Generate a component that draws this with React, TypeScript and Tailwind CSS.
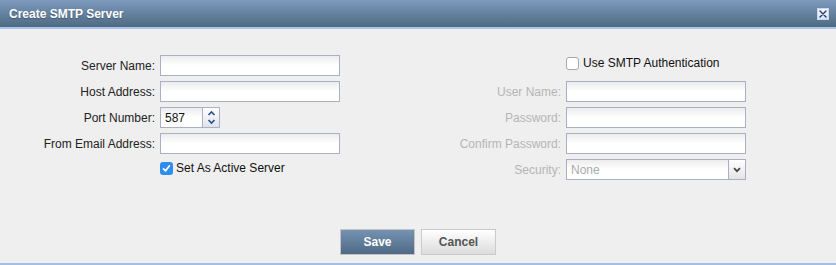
import React from "react"

const inputCls =
  "h-[21px] w-[180px] border border-[#abafc6] bg-gradient-to-b from-[#ececec] via-white to-white px-[4px] text-[12px] text-[#111] outline-none"

function Label({ text, disabled }: { text: string; disabled?: boolean }) {
  return (
    <div className={"flex h-[21px] items-center justify-end text-[12px] " + (disabled ? "text-[#b5b5b5]" : "text-[#222]")}>
      {text}
    </div>
  )
}

function CheckBox({ checked }: { checked?: boolean }) {
  if (checked) {
    return (
      <span className="flex h-[13px] w-[13px] items-center justify-center rounded-[3px] bg-[#2f8cf0]">
        <svg width="9" height="9" viewBox="0 0 9 9">
          <path d="M1.5 4.8 L3.6 6.8 L7.5 1.8" fill="none" stroke="white" strokeWidth="1.7" strokeLinecap="round" strokeLinejoin="round" />
        </svg>
      </span>
    )
  }
  return <span className="h-[13px] w-[13px] rounded-[3px] border border-[#a8a8a8] bg-white" />
}

export default function App() {
  return (
    <div className="flex h-[265px] w-[836px] flex-col bg-[#efefef] font-['Liberation_Sans',Arial,sans-serif]">
      {/* title bar */}
      <div className="flex h-[29px] items-center justify-between border-b-2 border-[#a9c6ec] bg-gradient-to-b from-[#7d9abd] to-[#4e6a83] pl-[9px] pr-[7px]">
        <span className="text-[12px] font-bold text-white [text-shadow:0_1px_1px_rgba(0,0,0,0.3)]">Create SMTP Server</span>
        <span className="flex h-[12px] w-[12px] items-center justify-center border border-[#c9d7ee] bg-gradient-to-b from-[#f4f7fc] to-[#d9e4f4]">
          <svg width="8" height="8" viewBox="0 0 8 8">
            <path d="M1 1 L7 7 M7 1 L1 7" stroke="#1f3a73" strokeWidth="1.4" strokeLinecap="round" />
          </svg>
        </span>
      </div>

      {/* form */}
      <div className="grid grid-cols-[155px_180px_216px_180px] gap-x-[5px] gap-y-[5px] pt-[26px]">
        <Label text="Server Name:" />
        <input className={inputCls} />
        <div />
        <label className="col-start-4 mt-[1px] flex h-[14px] items-center gap-[4px] self-start text-[12px] text-[#111]">
          <CheckBox />
          <span>Use SMTP Authentication</span>
        </label>

        <Label text="Host Address:" />
        <input className={inputCls} />
        <Label text="User Name:" disabled />
        <input className={inputCls} />

        <Label text="Port Number:" />
        <div className="flex h-[21px]">
          <input className="h-[21px] w-[43px] border border-[#abafc6] bg-gradient-to-b from-[#ececec] via-white to-white px-[4px] text-[12px] text-[#111] outline-none" defaultValue="587" />
          <div className="flex h-[21px] w-[17px] flex-col items-center justify-center border border-l-0 border-[#abafc6] bg-gradient-to-b from-white to-[#dfe3ea]">
            <svg width="9" height="17" viewBox="0 0 9 17">
              <path d="M1.5 6 L4.5 3 L7.5 6" fill="none" stroke="#2d4f86" strokeWidth="1.6" />
              <path d="M1.5 11 L4.5 14 L7.5 11" fill="none" stroke="#2d4f86" strokeWidth="1.6" />
            </svg>
          </div>
        </div>
        <Label text="Password:" disabled />
        <input type="password" className={inputCls} />

        <Label text="From Email Address:" />
        <input className={inputCls} />
        <Label text="Confirm Password:" disabled />
        <input type="password" className={inputCls} />

        <div />
        <label className="mt-[2px] flex h-[14px] items-center gap-[3px] self-start text-[12px] text-[#111]">
          <CheckBox checked />
          <span>Set As Active Server</span>
        </label>
        <Label text="Security:" disabled />
        <div className="flex h-[21px] w-[180px] border border-[#abafc6] bg-gradient-to-b from-[#ececec] via-white to-white">
          <span className="flex flex-1 items-center px-[4px] text-[12px] text-[#a9a9a9]">None</span>
          <span className="flex w-[17px] items-center justify-center border-l border-[#abafc6] bg-gradient-to-b from-white to-[#e4e4e4]">
            <svg width="8" height="6" viewBox="0 0 8 6">
              <path d="M1 1.2 L4 4.2 L7 1.2" fill="none" stroke="#444" strokeWidth="1.7" />
            </svg>
          </span>
        </div>
      </div>

      {/* buttons */}
      <div className="mt-auto flex justify-center gap-[6px] pb-[8px]">
        <button className="h-[26px] w-[75px] border border-[#c4c4c4] bg-gradient-to-b from-[#7592b3] to-[#4e6a84] text-[12px] font-bold text-white">
          Save
        </button>
        <button className="h-[26px] w-[75px] border border-[#cacaca] bg-gradient-to-b from-white to-[#dcdcdc] text-[12px] font-bold text-[#555]">
          Cancel
        </button>
      </div>
      <div className="h-[2px] bg-[#a2bfe6]" />
    </div>
  )
}
